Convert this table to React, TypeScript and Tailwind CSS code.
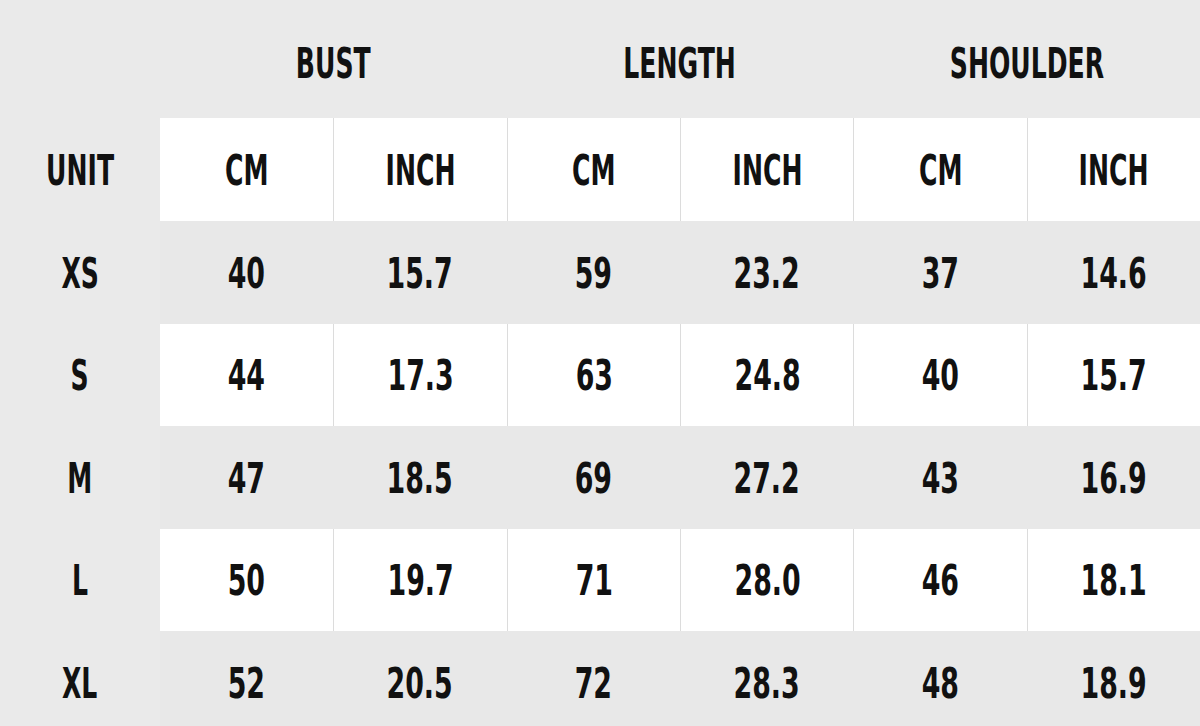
import React from "react";

const rows: [string, string[]][] = [
  ["XS", ["40", "15.7", "59", "23.2", "37", "14.6"]],
  ["S", ["44", "17.3", "63", "24.8", "40", "15.7"]],
  ["M", ["47", "18.5", "69", "27.2", "43", "16.9"]],
  ["L", ["50", "19.7", "71", "28.0", "46", "18.1"]],
  ["XL", ["52", "20.5", "72", "28.3", "48", "18.9"]],
];

const font = { fontFamily: "'DejaVu Sans Condensed', 'DejaVu Sans', sans-serif" };

function T({ children }: { children: React.ReactNode }) {
  return (
    <span className="inline-block text-[42px] font-bold leading-none text-[#111] scale-x-[0.71]">
      {children}
    </span>
  );
}

function L({ children }: { children: React.ReactNode }) {
  return (
    <span className="inline-block text-[42px] font-bold leading-none text-[#111] scale-x-[0.665]">
      {children}
    </span>
  );
}

export default function App() {
  return (
    <div className="w-[1200px] h-[726px] overflow-hidden bg-[#eaeaea]" style={font}>
      <div className="grid grid-cols-[160px_repeat(6,1fr)]">
        <div className="h-[118px]" />
        {["BUST", "LENGTH", "SHOULDER"].map((h) => (
          <div key={h} className="col-span-2 h-[118px] flex items-center justify-center pt-[10px]">
            <L>{h}</L>
          </div>
        ))}
        <div className="h-[103px] flex items-center justify-center pt-[2px]">
          <L>UNIT</L>
        </div>
        {["CM", "INCH", "CM", "INCH", "CM", "INCH"].map((u, i) => (
          <div
            key={i}
            className={`h-[103px] bg-white flex items-center justify-center pt-[2px] ${i > 0 ? "border-l-[1.5px] border-[#dcdcdc]" : ""}`}
          >
            <L>{u}</L>
          </div>
        ))}
        {rows.map(([size, vals], r) => {
          const white = r % 2 === 1;
          return (
            <React.Fragment key={size}>
              <div className="h-[102.5px] flex items-center justify-center pt-[3px]">
                <L>{size}</L>
              </div>
              {vals.map((v, i) => (
                <div
                  key={i}
                  className={`h-[102.5px] flex items-center justify-center pt-[3px] ${
                    white ? `bg-white ${i > 0 ? "border-l-[1.5px] border-[#dcdcdc]" : ""}` : "bg-[#e8e8e8]"
                  }`}
                >
                  <T>{v}</T>
                </div>
              ))}
            </React.Fragment>
          );
        })}
      </div>
    </div>
  );
}
